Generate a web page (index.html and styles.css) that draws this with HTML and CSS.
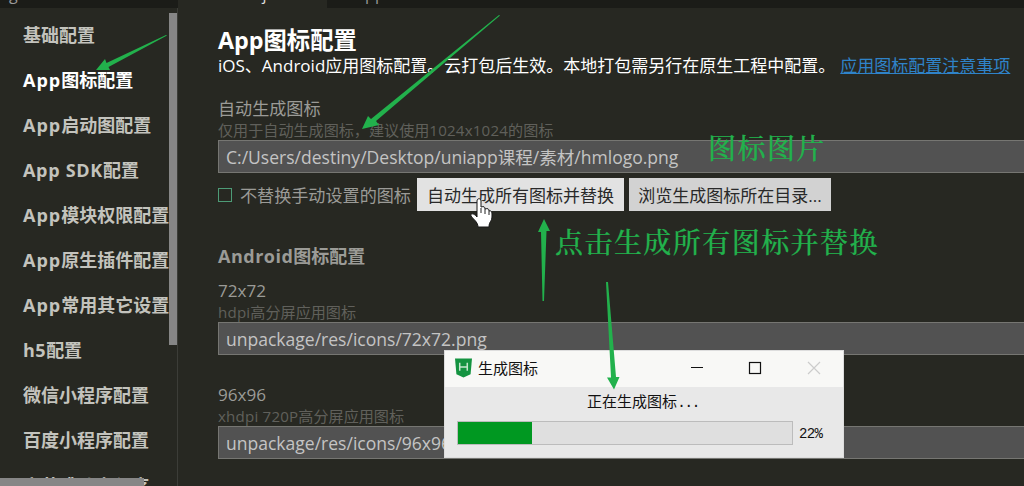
FILE: index.html
```html
<!DOCTYPE html>
<html lang="zh-CN">
<head>
<meta charset="utf-8">
<title>manifest.json</title>
<link rel="stylesheet" href="styles.css">
</head>
<body>
<div class="app">
  <header class="tabs">
    <div class="tab tab-first"><span>g</span></div>
    <div class="tab tab-active"><span>manifest.json</span></div>
    <div class="tab tab-last"><span>App.vue</span></div>
  </header>
  <div class="body">
    <aside class="sidebar">
      <nav class="menu">
        <a class="item">基础配置</a>
        <a class="item active"><span class="latin">App</span>图标配置</a>
        <a class="item"><span class="latin">App</span>启动图配置</a>
        <a class="item"><span class="latin sdk">App SDK</span>配置</a>
        <a class="item"><span class="latin">App</span>模块权限配置</a>
        <a class="item"><span class="latin">App</span>原生插件配置</a>
        <a class="item"><span class="latin">App</span>常用其它设置</a>
        <a class="item"><span class="h5">h5</span>配置</a>
        <a class="item">微信小程序配置</a>
        <a class="item">百度小程序配置</a>
        <a class="item">字节跳动小程序</a>
      </nav>
      <div class="vbar"></div>
      <div class="hbar"></div>
    </aside>
    <main class="content">
      <h1 class="title">App图标配置</h1>
      <p class="desc">iOS、Android应用图标配置。云打包后生效。本地打包需另行在原生工程中配置。<a class="link">应用图标配置注意事项</a></p>
      <section class="field field-auto">
        <div class="label">自动生成图标</div>
        <div class="hint">仅用于自动生成图标，建议使用<span class="num">1024x1024</span>的图标</div>
        <div class="input">C:/Users/destiny/Desktop/uniapp课程/素材/hmlogo.png</div>
      </section>
      <div class="actions">
        <span class="check"></span>
        <span class="check-label">不替换手动设置的图标</span>
        <button class="btn btn-hover">自动生成所有图标并替换</button>
        <button class="btn">浏览生成图标所在目录...</button>
      </div>
      <h2 class="subtitle"><span class="latin-sub">Android</span>图标配置</h2>
      <section class="field field-size">
        <div class="label">72x72</div>
        <div class="hint"><span class="num">hdpi</span>高分屏应用图标</div>
        <div class="input">unpackage/res/icons/72x72.png</div>
      </section>
      <section class="field field-next">
        <div class="label">96x96</div>
        <div class="hint"><span class="num">xhdpi 720P</span>高分屏应用图标</div>
        <div class="input">unpackage/res/icons/96x96.png</div>
      </section>
    </main>
  </div>
  <div class="dialog">
    <div class="dialog-bar">
      <svg class="logo" viewBox="0 0 18 20"><path fill="#149340" d="M0 0H18L16.5 16.5 9 20 1.5 16.5Z"/><path d="M5 4.500V13M13 4.500V13M5 9H13" fill="none" stroke="#c5e6cd" stroke-width="1.6"/></svg>
      <span class="dialog-title">生成图标</span>
      <svg class="controls" viewBox="0 0 132 14" fill="none"><path d="M1 6.5H13" stroke="#111"/><rect x="59.5" y="1.5" width="11" height="11" stroke="#111" stroke-width="1.2"/><path d="M118 1L130 13M130 1L118 13" stroke="#ccc" stroke-width="1.2"/></svg>
    </div>
    <div class="dialog-msg">正在生成图标<span class="dots">...</span></div>
    <div class="progress-row"><div class="progress"><div class="fill" style="width:22.2%"></div></div><span class="percent">22%</span></div>
  </div>
  <div class="note note-image">图标图片</div>
  <div class="note note-click">点击生成所有图标并替换</div>
  <svg class="overlay" viewBox="0 0 1024 486">
    <g fill="#22b14c">
      <path d="M167 35.5L108.500 67 110 70 96 70 105 59 106.500 63 166 35Z"/>
      <path d="M500 15.500L376 121 379 125 362 129 368 116 371 119 499 15Z"/>
      <path d="M542.500 301L541 232H538L544 219 550 231H546.500L544 301Z"/>
      <path d="M606 282L611 377.500H607L614 389.500 619.500 377H616L608 282Z"/>
    </g>
    <path d="M477 201C477 198 481 198 481 201V207C484 206 485 207 485 209C488 208 489 209 489 211C492 210 492 213 492 216C492 222 489 221 489 227H478C478 222 473 219 471 216C470 213 474 213 477 217Z" fill="#fff" stroke="#171717"/>
    <path d="M481 208V213M485 209V214M489 211V215" stroke="#222" fill="none"/>
  </svg>
</div>
</body>
</html>
```

FILE: styles.css
```css
* { box-sizing: border-box; }
body { margin: 0; background: #272822; font-family: "Open Sans", "Noto Sans CJK SC", sans-serif; }
.app { position: relative; width: 1024px; height: 486px; overflow: hidden; display: flex; flex-direction: column; }
.tabs { height: 8px; flex: none; display: flex; background: #1b1c18; overflow: hidden; color: #999; font-size: 16px; }
.tab { height: 8px; overflow: hidden; line-height: 20px; width: 178px; padding-left: 9px; }
.tab span { display: block; margin-top: -16px; }
.tab-active { width: 149px; padding-left: 15px; background: #272822; color: #ddd; }
.tab-last { padding-left: 28px; }
.body { flex: 1; min-height: 0; display: flex; }
.sidebar { position: relative; width: 178px; flex: none; border-right: 1px solid #3c3d38; overflow: hidden; }
.menu { display: flex; flex-direction: column; padding: 5px 8px 0 23px; overflow: hidden; }
.item { height: 45px; line-height: 45px; flex: none; font-size: 18px; font-weight: 700; color: #c3c3bd; white-space: nowrap; }
.item:last-child { line-height: 46px; }
.latin { letter-spacing: 1px; }
.sdk { letter-spacing: 0.7px; }
.h5 { letter-spacing: 0.5px; }
.active { color: #fff; }
.vbar { position: absolute; right: 0; top: 5px; width: 8px; height: 332px; background: #868686; }
.hbar { position: absolute; left: 0; bottom: 0; width: 144px; height: 8px; background: #868686; }
.content { flex: 1; min-width: 0; padding: 17px 0 0 40px; color: #9b9b97; }
.title { margin: 0; height: 30px; line-height: 30px; font-size: 23.3px; font-weight: 700; color: #fff; white-space: nowrap; }
.desc { margin: 0; height: 22px; line-height: 22px; font-size: 17px; color: #fff; white-space: nowrap; }
.link { color: #2f83c9; text-decoration: underline; margin-left: 5px; }
.field { white-space: nowrap; }
.field-auto { margin-top: 20px; }
.label { height: 24px; line-height: 24px; font-size: 17.1px; }
.hint { height: 19px; line-height: 19px; font-size: 15.1px; color: #60605b; }
.num { letter-spacing: 0.2px; }
.input { height: 33px; line-height: 32px; border: 1px solid #767672; border-right: 0; background: #525252; padding-left: 7px; font-size: 17.55px; color: #c4c4c4; }
.actions { display: flex; align-items: center; height: 33px; margin-top: 5px; white-space: nowrap; }
.check { width: 14px; height: 14px; border: 1px solid #4d9b76; margin-right: 8px; }
.check-label { width: 171px; font-size: 17.1px; margin-right: 6px; }
.btn { height: 33px; width: 207px; border: 0; padding: 0; background: #d2d2d2; color: #292929; font: 17px "Open Sans", "Noto Sans CJK SC", sans-serif; margin-right: 5px; }
.btn + .btn { width: 202px; }
.btn-hover { background: #e2e2e2; }
.subtitle { margin: 31px 0 0; height: 28px; line-height: 28px; font-size: 18px; font-weight: 700; white-space: nowrap; }
.latin-sub { letter-spacing: 0.5px; }
.field-size { margin-top: 9px; }
.field-next { margin-top: 28px; }
.dialog { position: absolute; left: 444px; top: 350px; width: 400px; height: 108px; background: #e8e8e8; border: 1px solid #ddd; color: #111; }
.dialog-bar { height: 36px; display: flex; align-items: center; background: #f8f8f6; padding: 0 0 2px 10px; }
.logo { width: 17px; height: 20px; }
.dialog-title { font-size: 15px; line-height: 20px; margin: -1px 0 0 6px; }
.controls { width: 132px; height: 14px; margin-left: auto; margin-right: 21px; }
.dialog-msg { height: 28px; line-height: 28px; padding-left: 142px; font-size: 15px; }
.dots { font-family: "Liberation Mono", monospace; letter-spacing: -1.8px; }
.progress-row { display: flex; align-items: center; padding: 6px 0 0 12px; }
.progress { width: 336px; height: 24px; border: 1px solid #bcbcbc; background: #dfdfdf; }
.fill { height: 100%; background: #009821; }
.percent { margin: 2px 0 0 6px; font: 14px "Liberation Mono", monospace; letter-spacing: -0.6px; }
.note { position: absolute; color: #22b14c; font-family: "Noto Serif CJK SC", "Noto Sans CJK SC", serif; font-size: 28px; font-weight: 500; line-height: 36px; letter-spacing: 1.45px; white-space: nowrap; -webkit-text-stroke: 0.2px #22b14c; }
.note-image { left: 708px; top: 129px; }
.note-click { left: 555px; top: 223px; }
.overlay { position: absolute; left: 0; top: 0; width: 1024px; height: 486px; pointer-events: none; }
```
